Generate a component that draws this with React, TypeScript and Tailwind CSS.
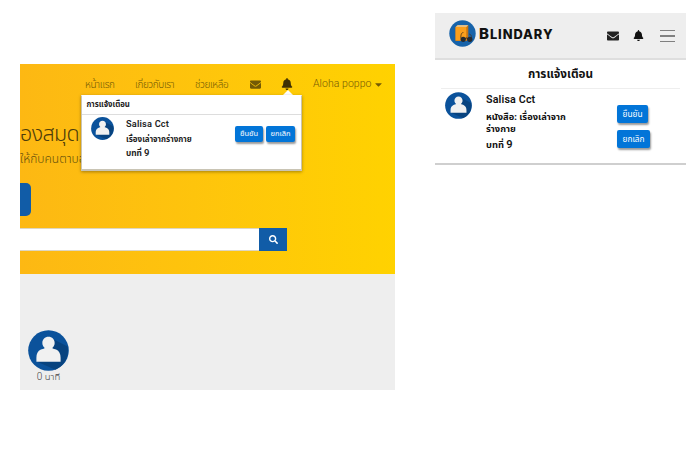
import React from "react";
import { FaEnvelope, FaBell, FaSearch, FaCaretDown } from "react-icons/fa";

function Avatar({ className }: { className: string }) {
  return (
    <svg viewBox="0 0 42 42" className={className}>
      <circle cx="21" cy="21" r="20.8" fill="#0b529b" />
      <path d="M27 10 L40.500 17 A20.800 20.800 0 0 1 28 40.600 L8.500 32 Z" fill="#08437f" />
      <path
        d="M21 7c-3.700 0-6.300 2.700-6.300 6.200 0 2 .8 3.600 2.100 4.700v1c-1 .4-2.400.6-3.600 1.200C10 21.600 8.600 24.500 8.600 28.500v3.900h24.800v-3.900c0-4-1.400-6.900-4.600-8.400-1.200-.6-2.600-.8-3.600-1.200v-1c1.300-1.100 2.100-2.700 2.100-4.700C27.300 9.700 24.700 7 21 7z"
        fill="#f1f1f1"
      />
    </svg>
  );
}

function Logo() {
  return (
    <svg viewBox="0 0 27 27" className="h-[27px] w-[27px] shrink-0">
      <circle cx="13.500" cy="13.500" r="13.200" fill="#1763aa" />
      <path d="M6.500 7 8.500 5.200h10.800v13L17.500 21H6.500z" fill="#c97513" />
      <path d="M6.500 7h10.800v13.500H6.500z" fill="#fb9f1c" />
      <path d="M6.700 6.800 8.600 5.300h10.600l-1.700 1.500z" fill="#f2d9a8" />
      <path d="M11.800 18.500c0-4 .6-6 2.600-6M22.500 18c0-2.500-.7-3.700-2.300-4" fill="none" stroke="#4a321b" strokeWidth="0.800" />
      <circle cx="14.200" cy="19.300" r="2.600" fill="#252a30" />
      <circle cx="20.800" cy="19.300" r="2.600" fill="#252a30" />
      <path d="M16 18.500q1.500-1 3 0" fill="none" stroke="#252a30" />
    </svg>
  );
}

function DesktopView() {
  return (
    <section className="relative mt-16 ml-5 h-[326px] w-[375px] shrink-0">
      <div className="flex h-full flex-col overflow-hidden bg-[#eeeeee]">
        <div className="flex h-[210px] flex-col bg-linear-to-r from-[#fdb813] to-[#ffd200]">
          <nav className="flex h-10 shrink-0 items-center pl-[65px] text-[10px] font-light tracking-[-0.400px] whitespace-nowrap text-[#745a05]">
            <span className="w-[50px]">หน้าแรก</span>
            <span className="w-[60px]">เกี่ยวกับเรา</span>
            <span className="w-[55px]">ช่วยเหลือ</span>
            <FaEnvelope className="h-[11px] w-[11px] text-[#745a05]" />
            <FaBell className="ml-[20px] h-[12px] w-[12px] text-[#3f3004]" />
            <span className="ml-[20px] w-[62px] font-['Roboto'] text-[10.500px] tracking-[0.050px]">Aloha poppo</span>
            <FaCaretDown className="h-[11px] w-[7px]" />
          </nav>
          <div className="mt-[14px] h-8 shrink-0 text-[21.500px] leading-[30px] font-light tracking-[-0.600px] whitespace-nowrap text-[#4d3d0b]">องสมุด</div>
          <div className="h-[18px] shrink-0 text-[12px] leading-[17px] font-light whitespace-nowrap text-[#65500c]">ให้กับคนตาบอด</div>
          <div className="mt-[15px] h-[33px] w-[11px] shrink-0 rounded-r-[5px] bg-[#115ca7]" />
          <div className="mt-[12px] flex h-[23px] w-[267.400px] shrink-0">
            <div className="grow border-y border-[#ddd6c2] bg-white" />
            <div className="flex w-[28px] items-center justify-center bg-[#115ca7]">
              <FaSearch className="-mt-px h-[9px] w-[9px] text-white" />
            </div>
          </div>
        </div>
        <div className="ml-px flex w-[55px] flex-col items-center pt-[56px]">
          <Avatar className="h-[41px] w-[41px]" />
          <span className="text-[9.500px] leading-[12px] font-light whitespace-nowrap text-[#444444]">
            <span className="font-['Roboto'] text-[10px]">0</span> นาที
          </span>
        </div>
      </div>
      <div className="absolute top-[26px] left-[262px] h-0 w-0 border-x-[6px] border-b-[6px] border-x-transparent border-b-white" />
      <div className="absolute top-[31px] left-[61px] h-[76px] w-[221px] border border-b-2 border-[#c9c4b4] border-t-white bg-white font-bold text-[#222222] shadow-[0_1px_3px_rgba(0,0,0,0.35)]">
        <div className="h-[19px] border-b border-[#dddddd] pl-[4.500px] text-[7.800px] leading-[17px] whitespace-nowrap">การแจ้งเตือน</div>
        <div className="flex pl-[9px]">
          <Avatar className="mt-[2px] h-[23px] w-[23px] shrink-0" />
          <div className="ml-[12px] w-[109px] pt-[2px] text-[8px] leading-[14.500px] whitespace-nowrap">
            <div className="font-['Roboto'] text-[9.200px] font-semibold tracking-[0.200px]">Salisa Cct</div>
            <div>เรื่องเล่าจากร่างกาย</div>
            <div className="text-[8.300px]">บทที่ <span className="font-['Roboto'] text-[9.500px] font-semibold">9</span></div>
          </div>
          <div className="flex gap-[3px] pt-[11px] text-[7.500px] leading-4 font-normal text-white">
            <div className="h-4 w-7 rounded-[2px] bg-[#0275d8] text-center leading-[14px] shadow-[1px_2px_2px_rgba(0,0,0,0.4)]">ยืนยัน</div>
            <div className="h-4 w-[29px] rounded-[2px] bg-[#0275d8] text-center leading-[14px] shadow-[1px_2px_2px_rgba(0,0,0,0.4)]">ยกเลิก</div>
          </div>
        </div>
      </div>
    </section>
  );
}

function MobileView() {
  return (
    <section className="mt-[13px] ml-10 h-[152px] w-[251px] shrink-0 border-b-2 border-[#cfcfcf]">
      <header className="flex h-[47px] items-center border-b-2 border-[#dedede] bg-[#eeeeee] pr-[11px] pl-[14px]">
        <div className="-mt-1 flex items-center">
          <Logo />
          <span className="mt-px ml-[3px] w-[76px] font-['Inter'] text-[15px] leading-5 font-extrabold tracking-[0.950px] whitespace-nowrap text-[#111111]">
            B<span className="text-[12.800px]">LINDARY</span>
          </span>
        </div>
        <FaEnvelope className="ml-[52px] h-3 w-3 text-[#222222]" />
        <FaBell className="ml-[14px] h-[11px] w-[11px] text-[#111111]" />
        <div className="ml-auto flex w-[15px] flex-col gap-[4px] pt-px">
          <div className="h-[1.500px] bg-[#808080]" />
          <div className="h-[1.500px] bg-[#808080]" />
          <div className="h-[1.500px] bg-[#808080]" />
        </div>
      </header>
      <div className="mx-[6px] h-[29px] border-b border-[#eeeeee] text-center text-[11.700px] leading-[26px] font-bold text-[#111111]">การแจ้งเตือน</div>
      <div className="flex pl-[10px] text-[#111111]">
        <Avatar className="mt-[3px] h-[27px] w-[27px] shrink-0" />
        <div className="ml-[14px] w-[131px] pt-[5px] text-[9.300px] leading-[12px] font-bold whitespace-nowrap">
          <div className="font-['Roboto'] text-[10.700px] font-semibold tracking-[0.150px]">Salisa Cct</div>
          <div className="mt-[5px]">หนังสือ: เรื่องเล่าจาก</div>
          <div>ร่างกาย</div>
          <div className="mt-[4px]">บทที่ <span className="font-['Roboto'] text-[11px] font-semibold">9</span></div>
        </div>
        <div className="flex flex-col gap-[7px] pt-[16px] text-[8.300px] leading-[17px] text-white">
          <div className="h-[18px] w-[31px] rounded-[2px] bg-[#0275d8] text-center shadow-[1px_2px_2px_rgba(0,0,0,0.4)]">ยืนยัน</div>
          <div className="h-[18px] w-[33px] rounded-[2px] bg-[#0275d8] text-center shadow-[1px_2px_2px_rgba(0,0,0,0.4)]">ยกเลิก</div>
        </div>
      </div>
    </section>
  );
}

export default function App() {
  return (
    <main className="flex h-[472px] w-[700px] items-start overflow-hidden bg-white font-['Noto_Sans','Noto_Sans_Thai',sans-serif]">
      <DesktopView />
      <MobileView />
    </main>
  );
}
